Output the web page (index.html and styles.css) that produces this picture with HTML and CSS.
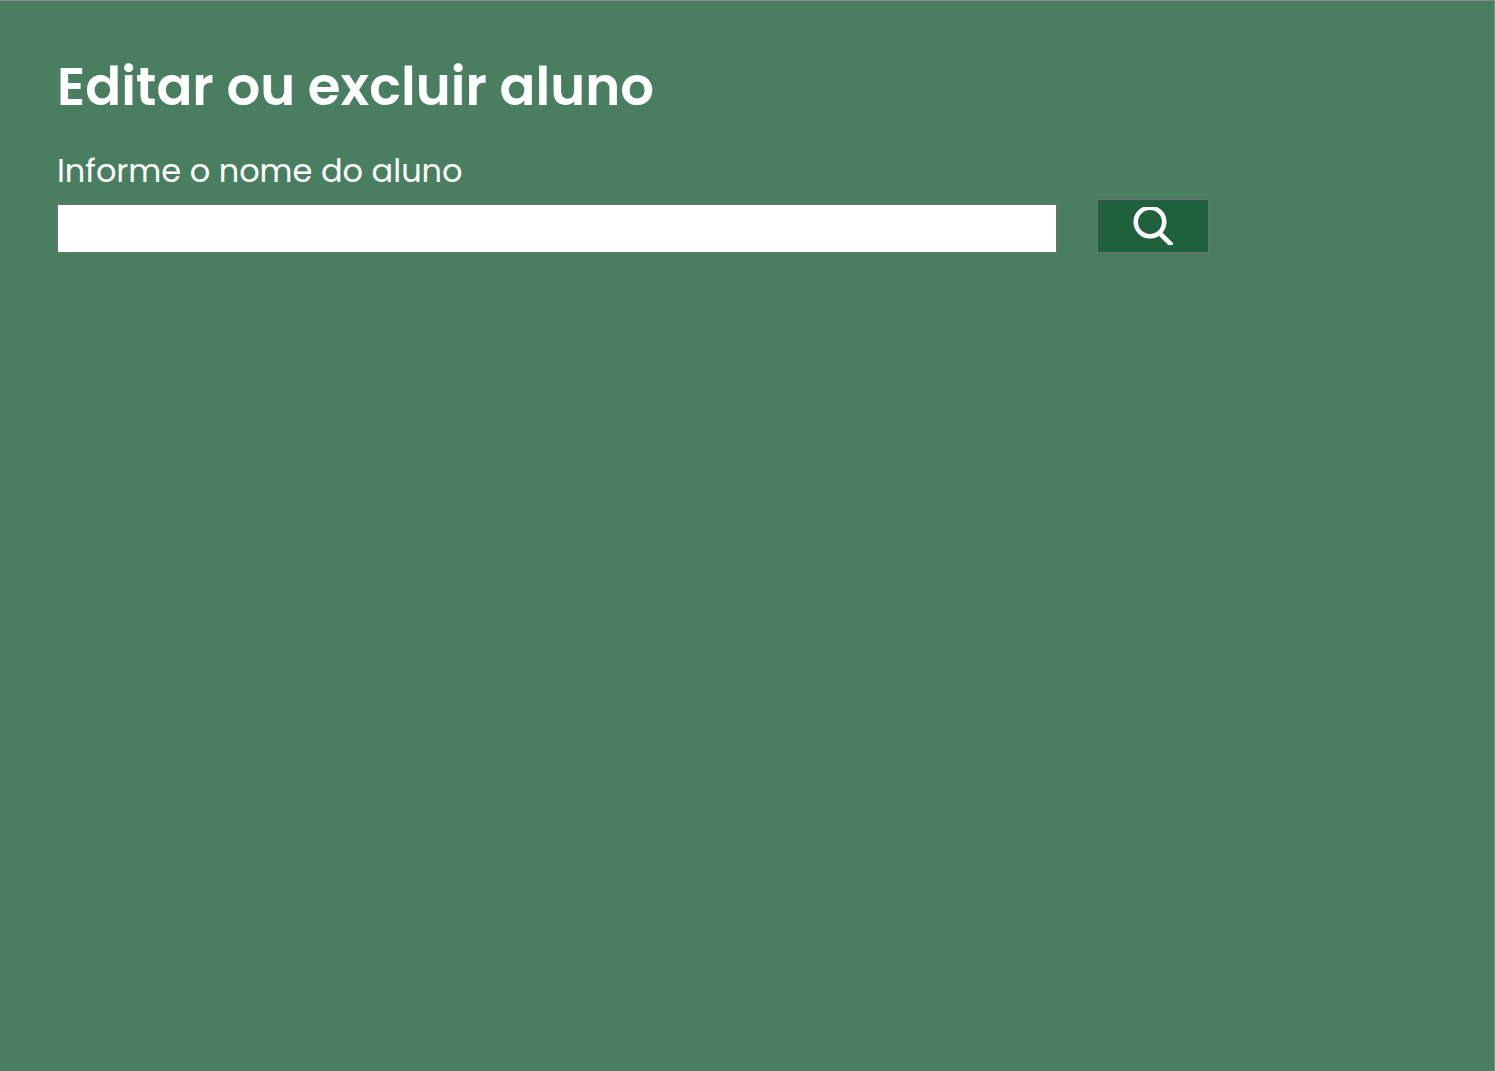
FILE: index.html
```html
<!DOCTYPE html>
<html lang="pt-BR">
<head>
  <meta charset="utf-8">
  <meta name="viewport" content="width=device-width, initial-scale=1">
  <title>Editar ou excluir aluno</title>
  <link rel="stylesheet" href="styles.css">
</head>
<body>
  <main class="page">
    <h1 class="title">Editar ou excluir aluno</h1>
    <form class="search">
      <label class="search-label" for="nome">Informe o nome do aluno</label>
      <div class="search-row">
        <input class="search-input" id="nome" name="nome" type="text">
        <button class="search-button" type="submit" aria-label="Buscar">
          <svg class="search-icon" viewBox="0 0 40 38" width="40" height="38" aria-hidden="true">
            <circle cx="17" cy="15" r="14.2" />
            <path d="M26.5 26 L37.5 37" />
          </svg>
        </button>
      </div>
    </form>
  </main>
</body>
</html>
```

FILE: styles.css
```css
* {
  box-sizing: border-box;
}

body {
  margin: 0;
  font-family: Poppins, Inter, sans-serif;
  color: #fff;
}

.page {
  min-height: 100vh;
  padding: 46px 56px 40px 57px;
  background: #497f60;
  border-top: 1px solid #8a8a8a;
  border-right: 1px solid #8a8a8a;
}

.title {
  margin: 0 0 24px;
  font-size: 53px;
  line-height: 80px;
  font-weight: 600;
}

.search {
  max-width: 1152px;
}

.search-label {
  display: block;
  margin-bottom: 8px;
  font-size: 32px;
  line-height: 40px;
  font-weight: 400;
}

.search-row {
  display: flex;
  align-items: flex-end;
  gap: 40px;
}

.search-input {
  flex: 1;
  min-width: 0;
  height: 49px;
  padding: 0 12px;
  border: 1px solid #707070;
  border-radius: 0;
  background: #fff;
  color: #222;
  font: inherit;
  font-size: 24px;
}

.search-button {
  display: flex;
  align-items: center;
  justify-content: center;
  width: 112px;
  height: 54px;
  padding: 0;
  border: 1px solid #707070;
  background: #20613d;
  cursor: pointer;
}

.search-icon {
  fill: none;
  stroke: #fff;
  stroke-width: 4.6;
  stroke-linecap: round;
}
```
